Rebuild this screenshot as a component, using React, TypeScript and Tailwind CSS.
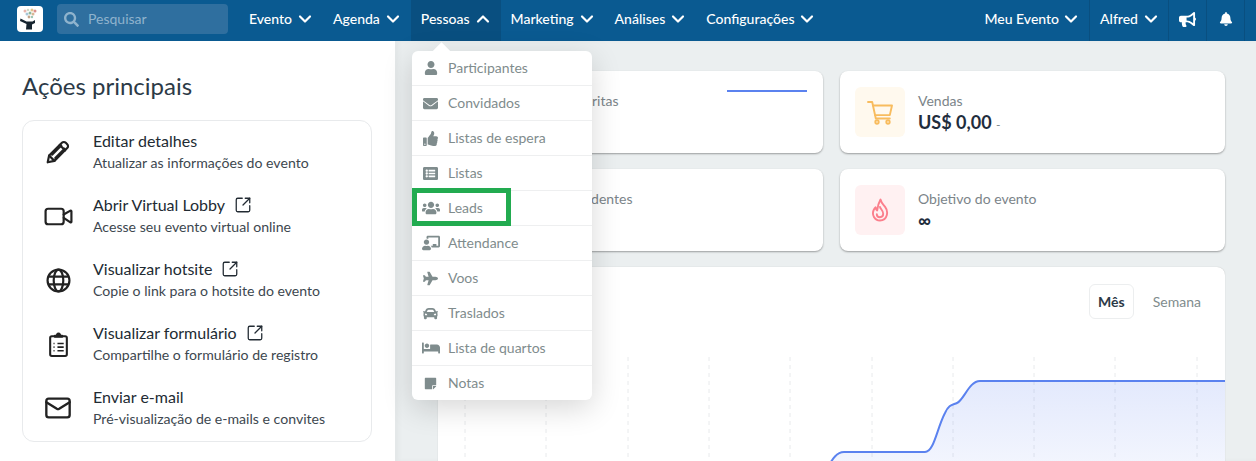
import React from "react";
import { ChevronDown, ChevronUp, Mail, SquareArrowOutUpRight, Users, Video } from "lucide-react";
import {
  FaBed,
  FaBell,
  FaBullhorn,
  FaCar,
  FaChalkboardTeacher,
  FaEnvelope,
  FaListAlt,
  FaPlane,
  FaSearch,
  FaStickyNote,
  FaThumbsUp,
  FaUser,
  FaUsers,
} from "react-icons/fa";

const navLeft = [
  { label: "Evento" },
  { label: "Agenda" },
  { label: "Pessoas", open: true },
  { label: "Marketing" },
  { label: "Análises" },
  { label: "Configurações" },
];

const menu = [
  { label: "Participantes", icon: <FaUser size={14} /> },
  { label: "Convidados", icon: <FaEnvelope size={15} /> },
  { label: "Listas de espera", icon: <FaThumbsUp size={15} /> },
  { label: "Listas", icon: <FaListAlt size={15} /> },
  { label: "Leads", icon: <FaUsers size={18} />, marked: true },
  { label: "Attendance", icon: <FaChalkboardTeacher size={18} /> },
  { label: "Voos", icon: <FaPlane size={15} /> },
  { label: "Traslados", icon: <FaCar size={15} /> },
  { label: "Lista de quartos", icon: <FaBed size={18} /> },
  { label: "Notas", icon: <FaStickyNote size={13} /> },
];

function PencilIcon() {
  return (
    <svg width="26" height="26" viewBox="0 0 24 24" fill="none" stroke="currentColor" strokeWidth="2" strokeLinejoin="round" strokeLinecap="round">
      <path d="M2.5 21.5l1.3-6.2L15.6 3.5c1-1 2.6-1 3.6 0l1.3 1.3c1 1 1 2.6 0 3.6L8.7 20.2z" />
      <path d="M13.6 5.5l5 5M6.5 14.5l8.5-8.5M9.5 17.5L18 9M3.8 15.3l4.9 4.9" />
    </svg>
  );
}

function GlobeIcon() {
  return (
    <svg width="25" height="25" viewBox="0 0 24 24" fill="none" stroke="currentColor" strokeWidth="2.1">
      <circle cx="12" cy="12" r="10.5" />
      <ellipse cx="12" cy="12" rx="4.6" ry="10.5" />
      <path d="M2.4 8.2h19.2M2.4 15.8h19.2" />
    </svg>
  );
}

function FormIcon() {
  return (
    <svg width="25" height="25" viewBox="0 0 24 24" fill="none" stroke="currentColor" strokeWidth="2" strokeLinejoin="round">
      <rect x="4" y="4" width="16" height="19" rx="1.6" />
      <path d="M8.5 4.5V3.6h2A1.6 1.6 0 0 1 12 1.5a1.6 1.6 0 0 1 1.5 2.1h2v.9z" fill="currentColor" />
      <path d="M11 11h6M11 14.5h6M11 18h6M7.2 11h1M7.2 14.5h1M7.2 18h1" strokeWidth="1.6" />
    </svg>
  );
}

function CartIcon() {
  return (
    <svg width="26" height="25" viewBox="0 0 26 25" fill="none" stroke="#f8bc5e" strokeWidth="1.9" strokeLinejoin="round" strokeLinecap="round">
      <path d="M1 2h4.2l3.6 16.5h14" />
      <path d="M6 5.5h19l-2.2 9.6H8" />
      <circle cx="10" cy="22" r="1.7" />
      <circle cx="21" cy="22" r="1.7" />
    </svg>
  );
}

function FlameIcon() {
  return (
    <svg width="18" height="24" viewBox="0 0 18 24" fill="none" stroke="#fb7f8c" strokeWidth="1.9" strokeLinejoin="round" strokeLinecap="round">
      <path d="M9.5 1.5c.8 3.4 2.4 4.5 4.6 7.3 3.5 4.4 2.6 13.7-5.1 13.7C3.4 22.500 .6 16.500 2.700 12c.5-1 1.200-2 2-2.700.1 1.500.6 2.500 1.500 3.200.4-3.700 1.300-7.500 3.300-11z" />
      <path d="M9 9c.4 2 3.200 3.400 3.200 6.800 0 2-1.400 3.400-3.200 3.400-1.800 0-3.200-1.200-3.200-3" />
    </svg>
  );
}

const actions = [
  { title: "Editar detalhes", text: "Atualizar as informações do evento", icon: <PencilIcon /> },
  { title: "Abrir Virtual Lobby", text: "Acesse seu evento virtual online", icon: <Video size={31} strokeWidth={1.7} />, link: true },
  { title: "Visualizar hotsite", text: "Copie o link para o hotsite do evento", icon: <GlobeIcon />, link: true },
  { title: "Visualizar formulário", text: "Compartilhe o formulário de registro", icon: <FormIcon />, link: true },
  { title: "Enviar e-mail", text: "Pré-visualização de e-mails e convites", icon: <Mail size={28} strokeWidth={2} /> },
];

function Logo() {
  return (
    <svg width="26" height="26" viewBox="0 0 26 26" className="shrink-0">
      <rect width="26" height="26" rx="4" fill="#fff" />
      <circle cx="8" cy="5" r="1.500" fill="#e8b5ad" />
      <circle cx="11" cy="4" r="1.300" fill="#cfd9c8" />
      <circle cx="15" cy="4" r="1.500" fill="#e2c28a" />
      <circle cx="18" cy="5" r="1.500" fill="#d9908c" />
      <circle cx="10" cy="8" r="1.500" fill="#a8c6d8" />
      <circle cx="13" cy="7" r="1.500" fill="#8fb89c" />
      <circle cx="16" cy="8" r="1.500" fill="#d8b896" />
      <circle cx="12" cy="11" r="1.400" fill="#c2a58c" />
      <circle cx="15" cy="11" r="1.200" fill="#9cc7b5" />
      <path d="M3.500 12.500l6 3h6l2.500-1.500v3l-3 1.500v5h-6l.5-5.500-6.500-3z" fill="#16242f" />
    </svg>
  );
}

function StatCard({ label, value, icon, tint, extra }: { label: string; value?: React.ReactNode; icon: React.ReactNode; tint: string; extra?: React.ReactNode }) {
  return (
    <div className="flex h-[82px] items-center gap-[13px] rounded-lg bg-white px-[15px] shadow-[0_1px_2px_rgba(0,0,0,0.35)]">
      <div className={`flex h-[50px] w-[50px] shrink-0 items-center justify-center rounded-md ${tint}`}>{icon}</div>
      <div className="flex flex-col">
        <span className="text-[14px] leading-[20px] text-[#7b8489]">{label}</span>
        <span className="h-[22px] text-[18px] font-bold leading-[22px] text-[#1f2d3d]">{value}</span>
      </div>
      {extra}
    </div>
  );
}

function Chart() {
  const grid = [465, 546, 628, 709, 790, 872, 953, 1034, 1115, 1197];
  const curve = "M826 470 C832 460 836 452 844 452 L925 452 C934 452 937 428 945 413 C949 404 953 405 957 403 C964 400 969 381 980 381 L1225 381";
  return (
    <svg width="787" height="110" viewBox="438 357 787 110" className="block shrink-0">
      <defs>
        <linearGradient id="area" x1="0" y1="0" x2="0" y2="1">
          <stop offset="0" stopColor="#5b7ff0" stopOpacity="0.17" />
          <stop offset="1" stopColor="#5b7ff0" stopOpacity="0.07" />
        </linearGradient>
      </defs>
      {grid.map((x) => (
        <line key={x} x1={x} x2={x} y1="357" y2="467" stroke="#e8eaec" strokeDasharray="4 4" />
      ))}
      <path d={`${curve} L1225 470 Z`} fill="url(#area)" />
      <path d={curve} fill="none" stroke="#5b82ef" strokeWidth="2" />
    </svg>
  );
}

export default function App() {
  return (
    <div className="relative flex h-[461px] w-[1256px] flex-col overflow-hidden bg-white font-['Lato','Liberation_Sans',sans-serif]">
      <header className="flex h-[41px] shrink-0 items-center bg-[#0a5a91] pl-[17px] text-[14px] text-white">
        <div className="mb-[3px] shrink-0">
          <Logo />
        </div>
        <div className="mb-[3px] ml-[14px] flex h-[30px] w-[171px] items-center gap-[9px] rounded bg-[#2f6f9f] pl-[7px] text-[#8fb3cd]">
          <FaSearch size={15} />
          <span className="mb-[2px]">Pesquisar</span>
        </div>
        <nav className="ml-[11px] flex h-full items-stretch">
          {navLeft.map((n) => (
            <div key={n.label} className={`flex items-center gap-[3px] pb-[3px] pl-[10px] pr-[8px] font-medium ${n.open ? "bg-[#094f80]" : ""}`}>
              <span className="mb-[2px]">{n.label}</span>
              {n.open ? <ChevronUp size={20} strokeWidth={2.6} /> : <ChevronDown size={20} strokeWidth={2.6} />}
            </div>
          ))}
        </nav>
        <div className="ml-auto flex h-full items-stretch pr-[11px]">
          <div className="flex items-center gap-[2px] border-r border-[#094f80] pb-[3px] pr-[8px] font-medium">
            <span className="mb-[2px]">Meu Evento</span>
            <ChevronDown size={20} strokeWidth={2.6} />
          </div>
          <div className="flex items-center gap-[3px] border-r border-[#094f80] pb-[3px] pl-[10px] pr-[7px] font-medium">
            <span className="mb-[2px]">Alfred</span>
            <ChevronDown size={20} strokeWidth={2.6} />
          </div>
          <div className="flex w-[38px] items-center justify-center border-r border-[#094f80] pb-[3px]">
            <FaBullhorn size={17} />
          </div>
          <div className="flex w-[38px] items-center justify-center border-r border-[#094f80] pb-[3px]">
            <FaBell size={14} />
          </div>
        </div>
      </header>

      <div className="flex min-h-0 flex-1">
        <aside className="w-[395px] shrink-0 pl-[22px] pr-[23px] pt-[29px]">
          <h1 className="text-[24px] leading-[32px] text-[#2c3a47]">Ações principais</h1>
          <div className="mt-[18px] h-[322px] rounded-xl border border-[#e8eaec]">
            {actions.map((a) => (
              <div key={a.title} className="flex h-[64px] items-center pb-[2px]">
                <div className="flex w-[70px] shrink-0 items-center justify-center text-[#222]">{a.icon}</div>
                <div className="flex flex-col">
                  <div className="flex items-center gap-[9px] text-[16px] leading-[22px] text-[#222b33]">
                    {a.title}
                    {a.link && <SquareArrowOutUpRight size={18} strokeWidth={1.7} />}
                  </div>
                  <div className="text-[14.1px] leading-[22px] text-[#3d474f]">{a.text}</div>
                </div>
              </div>
            ))}
          </div>
        </aside>

        <main className="flex min-w-0 flex-1 flex-col bg-[#ebeff0] pl-[43px] pr-[31px] pt-[30px] shadow-[inset_4px_0_4px_rgba(0,0,0,0.03)]">
          <div className="grid grid-cols-2 gap-x-[17px] gap-y-[16px]">
            <StatCard
              label="Pessoas inscritas"
              tint="bg-[#eef1fd]"
              icon={<Users size={24} className="text-[#5b82ef]" />}
              extra={<div className="mb-[42px] ml-auto mr-[1px] h-[2px] w-[80px] bg-[#5b82ef]" />}
            />
            <StatCard
              label="Vendas"
              value={
                <>
                  US$ 0,00 <span className="text-[12px] font-normal text-[#7b8489]">-</span>
                </>
              }
              tint="bg-[#fff9ee]"
              icon={<CartIcon />}
            />
            <StatCard label="Pedidos pendentes" tint="bg-[#eef1fd]" icon={<Users size={24} className="text-[#5b82ef]" />} />
            <StatCard label="Objetivo do evento" value="∞" tint="bg-[#fff1f2]" icon={<FlameIcon />} />
          </div>
          <section className="mt-[16px] flex min-h-0 flex-1 flex-col overflow-hidden rounded-t-lg bg-white shadow-[0_0_1px_rgba(0,0,0,0.25)]">
            <div className="flex h-[90px] shrink-0 items-start justify-end pr-[24px] pt-[17px] text-[14px]">
              <div className="flex h-[35px] w-[45px] items-center justify-center rounded-md border border-[#eceeef] font-bold text-[#2c3a47]">Mês</div>
              <div className="ml-[19px] flex h-[35px] items-center text-[#7f8c8d]">Semana</div>
            </div>
            <Chart />
          </section>
        </main>
      </div>

      {/* Pessoas dropdown */}
      <div className="absolute left-[412px] top-[51px] w-[180px] rounded-md bg-white shadow-[0_8px_30px_rgba(0,0,0,0.16)]">
        <div className="absolute -top-[6px] left-[23px] h-[13px] w-[13px] rotate-45 bg-white" />
        {menu.map((m, i) => (
          <div key={m.label} className={`relative flex items-center text-[14px] text-[#7f8c8d] ${i < menu.length - 1 ? "h-[35px] border-b border-[#eeeff0]" : "h-[34px]"}`}>
            <div className="flex w-[36px] shrink-0 items-center justify-center pl-[1px] text-[#7f8c8d]">{m.icon}</div>
            <span className="mb-[2px]">{m.label}</span>
            {m.marked && <div className="absolute -top-[3px] left-0 h-[38px] w-[99px] border-[5px] border-[#22ab50]" />}
          </div>
        ))}
      </div>
    </div>
  );
}
